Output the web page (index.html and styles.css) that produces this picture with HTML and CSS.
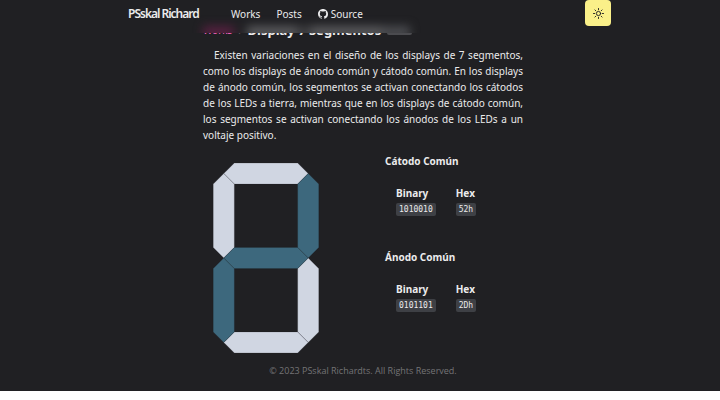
FILE: index.html
```html
<!DOCTYPE html>
<html lang="es">
<head>
<meta charset="utf-8">
<meta name="viewport" content="width=device-width, initial-scale=1">
<title>Display 7 Segmentos</title>
<link rel="stylesheet" href="styles.css">
</head>
<body>
<div class="page">
  <header class="topbar">
    <div class="glow"></div>
    <div class="topbar-inner">
      <a class="brand" href="#">PSskal Richard</a>
      <nav class="nav">
        <a href="#">Works</a>
        <a href="#">Posts</a>
        <a class="source" href="#">
          <svg class="github" viewBox="0 0 16 16" aria-hidden="true"><path fill="currentColor" d="M8 0C3.58 0 0 3.58 0 8c0 3.54 2.29 6.53 5.47 7.59.4.07.55-.17.55-.38 0-.19-.01-.82-.01-1.49-2.01.37-2.53-.49-2.69-.94-.09-.23-.48-.94-.82-1.13-.28-.15-.68-.52-.01-.53.63-.01 1.08.58 1.23.82.72 1.21 1.87.87 2.33.66.07-.52.28-.87.51-1.07-1.78-.2-3.64-.89-3.64-3.95 0-.87.31-1.59.82-2.15-.08-.2-.36-1.02.08-2.12 0 0 .67-.21 2.2.82a7.6 7.6 0 0 1 4 0c1.53-1.04 2.2-.82 2.2-.82.44 1.1.16 1.92.08 2.12.51.56.82 1.27.82 2.15 0 3.07-1.87 3.75-3.65 3.95.29.25.54.73.54 1.48 0 1.07-.01 1.93-.01 2.2 0 .21.15.46.55.38A8 8 0 0 0 16 8c0-4.42-3.58-8-8-8z"/></svg>
          Source
        </a>
      </nav>
      <button class="theme" type="button" aria-label="Toggle theme">
        <svg viewBox="0 0 12 12" aria-hidden="true"><circle cx="6" cy="6" r="2.3"/><path d="M6 .5v1.4M6 10.1v1.4M.5 6h1.4M10.1 6h1.4M2.1 2.1l1 1M8.9 8.9l1 1M9.9 2.1l-1 1M3.1 8.9l-1 1"/></svg>
      </button>
    </div>
  </header>

  <main class="content">
    <div class="crumbs">
      <a href="#">Works</a>
      <span class="sep">›</span>
      <h1>Display 7 Segmentos</h1>
      <span class="year">2023</span>
    </div>
    <p class="intro">Existen variaciones en el diseño de los displays de 7 segmentos, como los displays de ánodo común y cátodo común. En los displays de ánodo común, los segmentos se activan conectando los cátodos de los LEDs a tierra, mientras que en los displays de cátodo común, los segmentos se activan conectando los ánodos de los LEDs a un voltaje positivo.</p>

    <div class="demo">
      <svg class="digit" viewBox="0 0 10 18" role="img" aria-label="Display">
        <polygon class="off" points="1,1 2,0 8,0 9,1 8,2 2,2"/>
        <polygon class="off" points="1,1 2,2 2,8 1,9 0,8 0,2"/>
        <polygon class="on" points="9,1 10,2 10,8 9,9 8,8 8,2"/>
        <polygon class="off" points="9,9 10,10 10,16 9,17 8,16 8,10"/>
        <polygon class="off" points="9,17 8,18 2,18 1,17 2,16 8,16"/>
        <polygon class="on" points="1,17 0,16 0,10 1,9 2,10 2,16"/>
        <polygon class="on" points="1,9 2,8 8,8 9,9 8,10 2,10"/>
      </svg>
      <div class="codes">
        <section>
          <h2>Cátodo Común</h2>
          <dl>
            <div><dt>Binary</dt><dd><code>1010010</code></dd></div>
            <div><dt>Hex</dt><dd><code>52h</code></dd></div>
          </dl>
        </section>
        <section>
          <h2>Ánodo Común</h2>
          <dl>
            <div><dt>Binary</dt><dd><code>0101101</code></dd></div>
            <div><dt>Hex</dt><dd><code>2Dh</code></dd></div>
          </dl>
        </section>
      </div>
    </div>
  </main>
  <footer>© 2023 PSskal Richardts. All Rights Reserved.</footer>
</div>
</body>
</html>
```
FILE: styles.css
```css
* { box-sizing: border-box; }
body {
  margin: 0;
  background: #fff;
  color: #ebebec;
  font: 10px/16px "Noto Sans", "Open Sans", sans-serif;
}
a { color: inherit; text-decoration: none; }
h1, h2, p, dl, dd { margin: 0; }
.page {
  background: #202023;
  padding: 20px 0 12px 6px;
}
.topbar {
  position: fixed;
  top: 0;
  left: 0;
  right: 0;
  z-index: 1;
  height: 33px;
  padding-left: 6px;
  overflow: hidden;
  background: #202023;
}
/* Frosted light of the heading that scrolls under the bar */
.glow {
  position: absolute;
  left: 6px;
  right: 0;
  bottom: -5px;
  max-width: 320px;
  height: 12px;
  margin: 0 auto;
  background: linear-gradient(90deg, #54203f 0 28px, #202023 34px 42px, #59595c 46px 92px, #3c3c3f 96px 106px, #59595c 110px 176px, #4b4c50 182px 207px, transparent 207px);
  filter: blur(5px);
}
.topbar-inner {
  position: relative;
  display: flex;
  align-items: flex-start;
  max-width: 496px;
  margin: 0 auto;
  padding-left: 13px;
}
.brand {
  width: 103px;
  padding-top: 6px;
  font-size: 12px;
  font-weight: 600;
  letter-spacing: -1px;
}
.nav {
  display: flex;
  flex: 1;
  gap: 16px;
  padding-top: 6px;
}
.source { display: flex; align-items: center; gap: 3px; }
.github { width: 10px; height: 10px; }
.theme {
  display: grid;
  place-items: center;
  width: 26px;
  height: 26px;
  padding: 0;
  border: 0;
  border-radius: 4px;
  background: #faf089;
  color: #202023;
}
.theme svg {
  width: 11px;
  height: 11px;
  fill: none;
  stroke: currentColor;
  stroke-width: 1;
  stroke-linecap: round;
}
.content {
  max-width: 320px;
  margin: 0 auto;
}
.crumbs {
  display: flex;
  align-items: center;
  height: 20px;
  gap: 6px;
}
.crumbs a { color: #ff63c3; }
.crumbs h1 { font-size: 13px; line-height: 20px; }
.year {
  padding: 0 3px;
  border-radius: 2px;
  background: #4b4b4f;
  font-size: 8px;
  font-weight: 700;
  line-height: 10px;
}
.intro {
  margin-top: 7px;
  text-align: justify;
  text-indent: 11px;
}
.demo {
  display: grid;
  grid-template-columns: 182px 1fr;
  padding-top: 10px;
}
.digit {
  width: 106px;
  height: 190px;
  margin: 10px 0 0 10px;
  overflow: visible;
}
.digit polygon { stroke: #202023; stroke-opacity: 0.3; stroke-width: 0.06; }
.on { fill: #3d687d; }
.off { fill: #d0d6e2; }
.codes h2 { font-size: 10px; line-height: 16px; }
.codes section { height: 96px; }
.codes dl {
  display: flex;
  gap: 20px;
  padding: 16px 0 0 11px;
}
.codes dt { font-weight: 700; }
.codes dd { display: flex; }
code {
  padding: 0 3px;
  margin-top: 2px;
  border-radius: 2px;
  background: #3e4045;
  font: 8px/13px "DejaVu Sans Mono", monospace;
}
footer {
  margin-top: 10px;
  color: #747476;
  font-family: "Open Sans", sans-serif;
  font-size: 9px;
  line-height: 16px;
  text-align: center;
}
```
